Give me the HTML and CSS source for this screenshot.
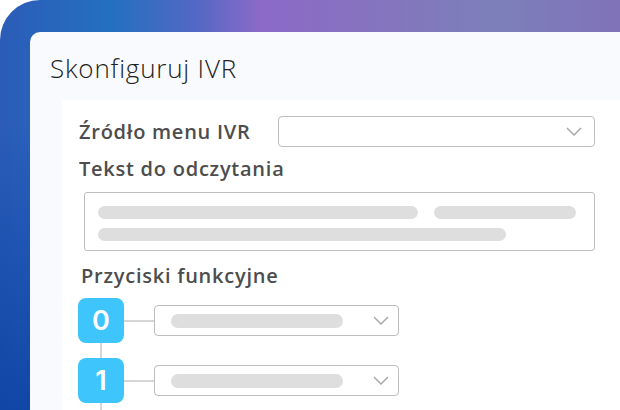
FILE: index.html
```html
<!DOCTYPE html>
<html lang="pl">
<head>
<meta charset="utf-8">
<title>Skonfiguruj IVR</title>
<link rel="stylesheet" href="styles.css">
</head>
<body>
<div class="stage">
  <div class="panel">
    <h1 class="title">Skonfiguruj IVR</h1>
    <div class="card">
      <div class="field-row">
        <label class="label">Źródło menu IVR</label>
        <div class="select select-wide">
          <svg class="chev" viewBox="0 0 16 9" width="16" height="9"><path d="M1 1 L8 8 L15 1" fill="none" stroke="#a9a9a9" stroke-width="1.5"/></svg>
        </div>
      </div>
      <div class="label label-block">Tekst do odczytania</div>
      <div class="textarea">
        <div class="sk-row"><span class="sk" style="width:320px"></span><span class="sk" style="width:142px"></span></div>
        <div class="sk-row"><span class="sk" style="width:408px"></span></div>
      </div>
      <div class="label label-keys">Przyciski funkcyjne</div>
      <div class="keys">
        <div class="key-row">
          <div class="badge">0</div>
          <div class="link"></div>
          <div class="select select-key">
            <span class="sk sk-sel"></span>
            <svg class="chev" viewBox="0 0 16 9" width="16" height="9"><path d="M1 1 L8 8 L15 1" fill="none" stroke="#a9a9a9" stroke-width="1.5"/></svg>
          </div>
        </div>
        <div class="key-row">
          <div class="badge">1</div>
          <div class="link"></div>
          <div class="select select-key">
            <span class="sk sk-sel"></span>
            <svg class="chev" viewBox="0 0 16 9" width="16" height="9"><path d="M1 1 L8 8 L15 1" fill="none" stroke="#a9a9a9" stroke-width="1.5"/></svg>
          </div>
        </div>
      </div>
    </div>
  </div>
</div>
</body>
</html>
```
FILE: styles.css
```css
* { box-sizing: border-box; }
html, body { margin: 0; padding: 0; background: #ffffff; }
body { width: 620px; height: 410px; overflow: hidden; font-family: "Open Sans", "Noto Sans", sans-serif; }

.stage {
  width: 620px;
  height: 410px;
  overflow: hidden;
  padding: 32px 0 0 30px;
  border-top-left-radius: 40px;
  background:
    linear-gradient(to bottom, rgba(10, 60, 160, 0) 30%, rgba(8, 62, 160, 0.75) 100%),
    linear-gradient(125deg, rgba(255,255,255,0) 72%, rgba(255,255,255,0.08) 72.5%, rgba(255,255,255,0.08) 80%, rgba(255,255,255,0) 80.5%),
    linear-gradient(90deg, #2b5cb8 0%, #2470c0 18%, #5468c4 32%, #8c6ac8 42%, #8474bd 62%, #7c80ba 80%, #8072b8 100%);
  display: flex;
}

.panel {
  flex: 1;
  background: #f8fafd;
  border-top-left-radius: 10px;
  padding: 0 0 0 20px;
  display: flex;
  flex-direction: column;
}

.title {
  margin: 18px 0 0 0;
  height: 50px;
  font-size: 26px;
  line-height: 36px;
  font-weight: 300;
  color: #222222;
  letter-spacing: 0.8px;
}

.card {
  margin-left: 12px;
  flex: 1;
  background: #ffffff;
  padding: 16px 0 0 17px;
  display: flex;
  flex-direction: column;
  align-items: flex-start;
}

.label {
  font-size: 20px;
  font-weight: 600;
  color: #4d4d4d;
  line-height: 24px;
  letter-spacing: 0.75px;
}

.field-row {
  display: flex;
  align-items: center;
  height: 31px;
}
.field-row .label { width: 199px; }

.select {
  background: #fff;
  border: 1px solid #bdbdbd;
  border-radius: 4px;
  display: flex;
  align-items: center;
  justify-content: flex-end;
}
.select-wide { width: 317px; height: 31px; padding-right: 12px; }

.label-block { margin-top: 10px; }

.textarea {
  margin-top: 11px;
  margin-left: 5px;
  width: 511px;
  height: 59px;
  border: 1px solid #bdbdbd;
  border-radius: 3px;
  padding: 13px 0 0 13px;
  display: flex;
  flex-direction: column;
  gap: 9px;
}
.sk-row { display: flex; gap: 16px; }
.sk {
  display: block;
  height: 13px;
  border-radius: 7px;
  background: #dedede;
}

.label-keys { margin-top: 13px; margin-left: 2px; }

.keys {
  margin-top: 10px;
  margin-left: -1px;
  display: flex;
  flex-direction: column;
  gap: 15px;
  position: relative;
}
.keys::before {
  content: "";
  position: absolute;
  left: 22px;
  top: 20px;
  bottom: -40px;
  width: 2px;
  background: #d6d6d6;
}

.key-row {
  display: flex;
  align-items: center;
  position: relative;
}

.badge {
  width: 46px;
  height: 45px;
  border-radius: 8px;
  background: #3ec5fb;
  color: #ffffff;
  font-family: "Inter", "Open Sans", sans-serif;
  font-size: 27px;
  font-weight: 600;
  display: flex;
  align-items: center;
  justify-content: center;
}

.link {
  width: 30px;
  height: 2px;
  background: #d6d6d6;
}

.select-key {
  width: 245px;
  height: 31px;
  padding: 0 9px 0 16px;
  justify-content: space-between;
}
.sk-sel { width: 172px; height: 14px; }
```
